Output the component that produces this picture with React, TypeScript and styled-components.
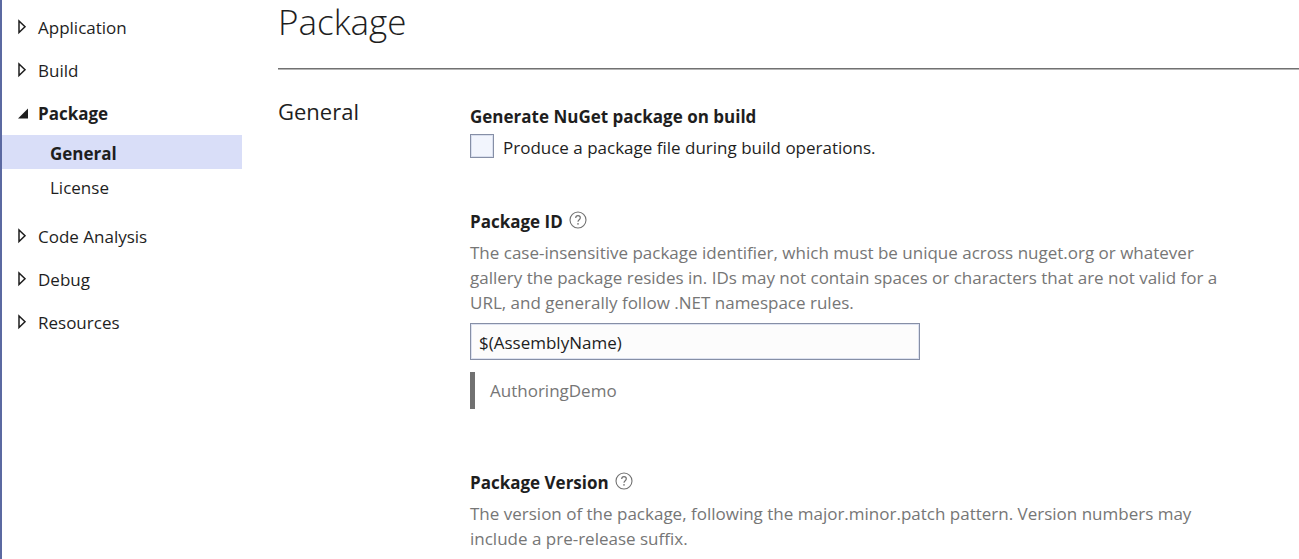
import React, { useState } from "react";
import styled, { createGlobalStyle } from "styled-components";

const GlobalStyle = createGlobalStyle`
  * { box-sizing: border-box; }
  body {
    margin: 0;
    background: #fff;
    color: #1e1e1e;
    font-family: "Open Sans", "Noto Sans", sans-serif;
    font-size: 17px;
    line-height: 25px;
  }
  button, input { font: inherit; color: inherit; }
  h1, h2, h3, p, ul { margin: 0; padding: 0; }
  ul { list-style: none; }
`;

const Page = styled.div`
  display: flex;
  min-height: 100vh;
  border-left: 2px solid #5b69a1;
`;

const Sidebar = styled.nav`
  flex: 0 0 240px;
  padding-top: 6px;
`;

const GroupButton = styled.button<{ $open: boolean }>`
  display: flex;
  align-items: center;
  gap: 8px;
  width: 100%;
  height: 43px;
  padding: 0 0 0 15px;
  border: 0;
  background: none;
  text-align: left;
  cursor: pointer;
  font-weight: ${(p) => (p.$open ? 700 : 400)};
`;

const Arrow = styled.svg`
  flex: none;
  width: 13px;
  height: 20px;
`;

const SubList = styled.ul`
  padding-bottom: 12px;
`;

const SubLink = styled.a<{ $active: boolean }>`
  display: flex;
  align-items: center;
  height: 34px;
  padding: 2px 0 0 48px;
  color: inherit;
  text-decoration: none;
  background: ${(p) => (p.$active ? "#d9def8" : "transparent")};
  font-weight: ${(p) => (p.$active ? 700 : 400)};
`;

const Main = styled.main`
  flex: 1;
  min-width: 0;
  margin-left: 36px;
`;

const Title = styled.h1`
  height: 69px;
  border-bottom: 1px solid #717171;
  box-shadow: 0 1px #b4b4b4;
  font-size: 35px;
  line-height: 44px;
  font-weight: 300;
`;

const Section = styled.section`
  display: grid;
  grid-template-columns: 192px minmax(0, 760px);
  padding-top: 29px;
`;

const SectionTitle = styled.h2`
  font-size: 22px;
  line-height: 27px;
  font-weight: 400;
`;

const Fields = styled.div`
  display: flex;
  flex-direction: column;
  gap: 49px;
  padding-top: 6px;
`;

const FieldHead = styled.div`
  display: flex;
  align-items: center;
  gap: 6px;
  height: 25px;
`;

const FieldTitle = styled.h3`
  font-size: 17px;
  line-height: 25px;
  font-weight: 700;
`;

const HelpButton = styled.button`
  display: flex;
  padding: 0 0 4px;
  border: 0;
  background: none;
  color: #717171;
  cursor: pointer;
`;

const CheckLabel = styled.label`
  display: flex;
  align-items: flex-start;
  gap: 9px;
  padding-top: 5px;
`;

const CheckText = styled.span`
  padding-top: 1px;
`;

const CheckBox = styled.input`
  appearance: none;
  width: 24px;
  height: 24px;
  margin: 0;
  border: 1px solid #868fa6;
  background: #f2f5fd;
  box-shadow: inset 0 0 0 1px #d9dfee;
  &:checked { background: #5b69a1; }
`;

const Description = styled.p`
  padding-top: 6px;
  color: #767676;
`;

const TextBox = styled.input`
  display: block;
  width: 100%;
  max-width: 450px;
  height: 37px;
  margin-top: 8px;
  padding: 2px 8px 0;
  border: 1px solid #868fa6;
  background: #fcfcfc;
  box-shadow: inset 0 0 0 1px #dde2f0;
`;

const Evaluated = styled.p`
  margin: 12px 0;
  padding: 6px 0 6px 15px;
  border-left: 5px solid #717171;
  color: #767676;
`;

const HelpIcon = () => (
  <svg width="18" height="18" viewBox="0 0 18 18" fill="none" stroke="currentColor" aria-hidden="true">
    <circle cx="9" cy="9" r="8" strokeWidth="1.1" />
    <path d="M6.7 7.1C6.7 5.6 7.6 4.7 9 4.7s2.3.8 2.3 2.1c0 1.9-2.3 1.9-2.3 4" strokeWidth="1.2" />
    <circle cx="9" cy="12.9" r=".8" fill="currentColor" stroke="none" />
  </svg>
);

const GroupArrow = ({ open }: { open: boolean }) => (
  <Arrow viewBox="0 0 13 20" aria-hidden="true">
    {open ? (
      <path d="M11 4.5v10H1z" fill="#1e1e1e" />
    ) : (
      <path d="M2 3v11.6L8 8.8z" fill="none" stroke="#1e1e1e" strokeWidth="1.5" />
    )}
  </Arrow>
);

const groups = [
  { name: "Application", items: [] },
  { name: "Build", items: [] },
  { name: "Package", items: ["General", "License"] },
  { name: "Code Analysis", items: [] },
  { name: "Debug", items: [] },
  { name: "Resources", items: [] },
] as { name: string; items: string[] }[];

export default function App() {
  const [openGroup, setOpenGroup] = useState("Package");
  const [produce, setProduce] = useState(false);
  const [packageId, setPackageId] = useState("$(AssemblyName)");

  return (
    <>
      <GlobalStyle />
      <Page>
        <Sidebar aria-label="Project properties">
          {groups.map(({ name, items }) => {
            const open = openGroup === name;
            return (
              <div key={name}>
                <GroupButton $open={open} aria-expanded={open} onClick={() => setOpenGroup(open ? "" : name)}>
                  <GroupArrow open={open} />
                  {name}
                </GroupButton>
                {open && items.length > 0 && (
                  <SubList>
                    {items.map((item) => (
                      <li key={item}>
                        <SubLink href={`#${item.toLowerCase()}`} $active={item === "General"}>
                          {item}
                        </SubLink>
                      </li>
                    ))}
                  </SubList>
                )}
              </div>
            );
          })}
        </Sidebar>
        <Main>
          <Title>Package</Title>
          <Section id="general">
            <SectionTitle>General</SectionTitle>
            <Fields>
              <div>
                <FieldTitle>Generate NuGet package on build</FieldTitle>
                <CheckLabel>
                  <CheckBox type="checkbox" checked={produce} onChange={(e) => setProduce(e.target.checked)} />
                  <CheckText>Produce a package file during build operations.</CheckText>
                </CheckLabel>
              </div>
              <div>
                <FieldHead>
                  <FieldTitle as="label" htmlFor="package-id">Package ID</FieldTitle>
                  <HelpButton aria-label="Help for Package ID"><HelpIcon /></HelpButton>
                </FieldHead>
                <Description>
                  The case-insensitive package identifier, which must be unique across nuget.org or whatever
                  gallery the package resides in. IDs may not contain spaces or characters that are not valid for a
                  URL, and generally follow .NET namespace rules.
                </Description>
                <TextBox id="package-id" value={packageId} onChange={(e) => setPackageId(e.target.value)} />
                <Evaluated>AuthoringDemo</Evaluated>
              </div>
              <div>
                <FieldHead>
                  <FieldTitle>Package Version</FieldTitle>
                  <HelpButton aria-label="Help for Package Version"><HelpIcon /></HelpButton>
                </FieldHead>
                <Description>
                  The version of the package, following the major.minor.patch pattern. Version numbers may
                  include a pre-release suffix.
                </Description>
              </div>
            </Fields>
          </Section>
        </Main>
      </Page>
    </>
  );
}
